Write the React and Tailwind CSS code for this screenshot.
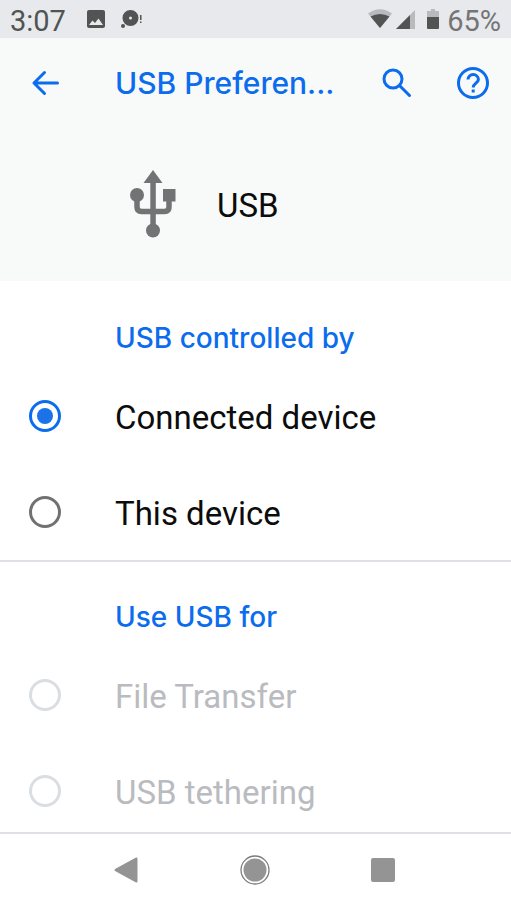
import React, { useState } from 'react'

const StatusBar = () => {
  return (
    <div className="flex h-[38px] shrink-0 items-center justify-between bg-[#e8e9ed] px-2.5 text-[#505452]">

      {/* time and notifications */}
      <div className="flex items-center">
        <span className="w-[76px] pt-1 text-[29px] leading-9">3:07</span>

        <svg width="20" height="20" viewBox="0 0 20 20" fill="currentColor">
          <path fillRule="evenodd" d="M3 1h14a2 2 0 0 1 2 2v14a2 2 0 0 1-2 2H3a2 2 0 0 1-2-2V3a2 2 0 0 1 2-2ZM3 16h14L12.500 9.500L9 14L6.500 11.500Z" />
        </svg>

        <svg className="ml-3.5" width="24" height="20" viewBox="0 0 24 20" fill="currentColor">
          <path fillRule="evenodd" d="M10.500 1a8 8 0 1 1 0 16a8 8 0 1 1 0-16ZM10.500 7.500a1.500 1.500 0 1 0 0 3a1.500 1.500 0 1 0 0-3Z" />
          <circle cx="3" cy="17" r="2" />
          <path d="M20 6h1.500v5H20zM20 12.500h1.500V14H20z" />
        </svg>
      </div>

      {/* wifi, signal, battery */}
      <div className="flex items-center">
        <svg width="58" height="22" viewBox="0 0 58 22" fill="currentColor">
          <path className="text-[#b9babd]" d="M1 5.500Q13 -3 25 5.500L13 20Z" />
          <path d="M3.500 8.500Q13 3.500 22.500 8.500L13 20Z" />
          <path className="text-[#b9babd]" d="M48 2V21H29Z" />
          <path d="M43 7V21H29Z" />
        </svg>
        <svg className="ml-0.5" width="12" height="22" viewBox="0 0 12 22" fill="currentColor">
          <path className="text-[#b9babd]" d="M4 1h4v2h4v8H0V3h4Z" />
          <path d="M0 9h12v11a1 1 0 0 1-1 1H1a1 1 0 0 1-1-1Z" />
        </svg>
        <span className="ml-2 pt-1 text-[29px] leading-9 text-[#747676]">65%</span>
      </div>

    </div>
  )
}

const AppBar = () => {
  return (
    <header className="flex h-[90px] shrink-0 items-center bg-[#f8faf9] pl-[29px] pr-[22px] text-[#0b6cee]">

      <button aria-label="Back" className="shrink-0">
        <svg width="32" height="32" viewBox="0 0 32 32" fill="none" stroke="currentColor" strokeWidth="3" strokeLinecap="round" strokeLinejoin="round">
          <path d="M28.500 16H5M15.500 5.500L5 16L15.500 26.500" />
        </svg>
      </button>

      <h1 className="ml-[54px] min-w-0 flex-1 whitespace-nowrap font-[Inter,sans-serif] text-[30px] font-medium leading-10">USB Preferen...</h1>

      <button aria-label="Search" className="shrink-0">
        <svg width="32" height="32" viewBox="0 0 32 32" fill="none" stroke="currentColor" strokeWidth="3" strokeLinecap="round">
          <circle cx="12" cy="12" r="9" />
          <path d="M19 19L28.500 28.500" />
        </svg>
      </button>

      <button aria-label="Help" className="ml-11 shrink-0">
        <svg width="32" height="32" viewBox="0 0 32 32" fill="none" stroke="currentColor" strokeWidth="3">
          <circle cx="16" cy="16" r="14.500" />
          <path d="M11 12.500a5.200 5 0 0 1 10.400 0c0 3.500-5.200 4-5.200 8" />
          <path d="M14.700 24h3" />
        </svg>
      </button>

    </header>
  )
}

const OptionGroup = ({ title, name, options, value, onChange, disabled }) => {
  return (
    <fieldset className="border-b-2 border-[#dfe0e5] first-of-type:mt-0.5 last:border-b-0">
      <legend className="block pb-3 pl-[115px] pt-[37px] font-[Inter,sans-serif] text-[28px] font-medium leading-9 text-[#0b6cee]">
        {title}
      </legend>

      {options.map((option) => (
        <label
          key={option}
          className="flex h-24 items-center gap-[54px] pl-[29px] text-[33px] leading-10 text-[#0c0c0c] has-disabled:text-[#b9bbbf]"
        >
          <input
            type="radio"
            name={name}
            value={option}
            checked={value === option}
            disabled={disabled}
            onChange={() => onChange(option)}
            className="grid size-8 shrink-0 appearance-none place-items-center rounded-full border-3 border-[#6f7173] before:size-4 before:rounded-full checked:border-[#0b6cee] checked:before:bg-[#1a73e8] disabled:border-[#dadde1]"
          />
          <span className="pt-1">{option}</span>
        </label>
      ))}
    </fieldset>
  )
}

const NavBar = () => {
  return (
    <nav className="flex h-[77px] shrink-0 items-center justify-center border-t-2 border-[#dfe0e5] bg-white pb-1 pr-0.5 text-[#949494]">
      <button aria-label="Back" className="flex w-32 justify-center">
        <svg width="28" height="30" viewBox="0 0 28 30" fill="currentColor" stroke="currentColor" strokeWidth="2" strokeLinejoin="round">
          <path d="M2.500 15L23.500 3.500V26.500Z" />
        </svg>
      </button>
      <button aria-label="Home" className="flex w-32 justify-center">
        <svg width="30" height="30" viewBox="0 0 30 30">
          <circle cx="15" cy="15" r="14" fill="none" stroke="#7c7c7c" strokeWidth="1.300" />
          <circle cx="15" cy="15" r="11.500" fill="currentColor" />
        </svg>
      </button>
      <button aria-label="Recent apps" className="flex w-32 justify-center">
        <span className="size-6 rounded-xs bg-[#949494]" />
      </button>
    </nav>
  )
}

const App = () => {
  const [controller, setController] = useState('Connected device')
  const [usage, setUsage] = useState('')

  return (
    <div className="flex h-screen flex-col bg-white font-[Roboto,sans-serif]">
      <StatusBar />
      <AppBar />

      <main className="min-h-0 flex-1 overflow-y-auto [scrollbar-width:none]">

        {/* usb entity header */}
        <div className="flex h-[153px] items-center bg-[#f8faf9] pl-[129px] pb-0.5">
          <svg width="48" height="68" viewBox="0 0 48 68" fill="#717375">
            <path d="M24 0L33.500 13H14.500Z" />
            <path d="M21.300 12h5.500v45h-5.500z" />
            <circle cx="24" cy="60.500" r="7" />
            <circle cx="8" cy="25" r="7" />
            <path d="M34 19h12.500v12.500H34z" />
            <path d="M8 26v11q0 4.500 4.500 4.500h23q4.500 0 4.500-4.500V26" fill="none" stroke="#717375" strokeWidth="5.500" />
          </svg>
          <h2 className="ml-10 pt-1 text-[33px] leading-10 text-[#0c0c0c]">USB</h2>
        </div>

        <OptionGroup
          title="USB controlled by"
          name="controller"
          options={['Connected device', 'This device']}
          value={controller}
          onChange={setController}
        />

        <OptionGroup
          title="Use USB for"
          name="usage"
          options={['File Transfer', 'USB tethering']}
          value={usage}
          onChange={setUsage}
          disabled
        />

      </main>

      <NavBar />
    </div>
  )
}

export default App
